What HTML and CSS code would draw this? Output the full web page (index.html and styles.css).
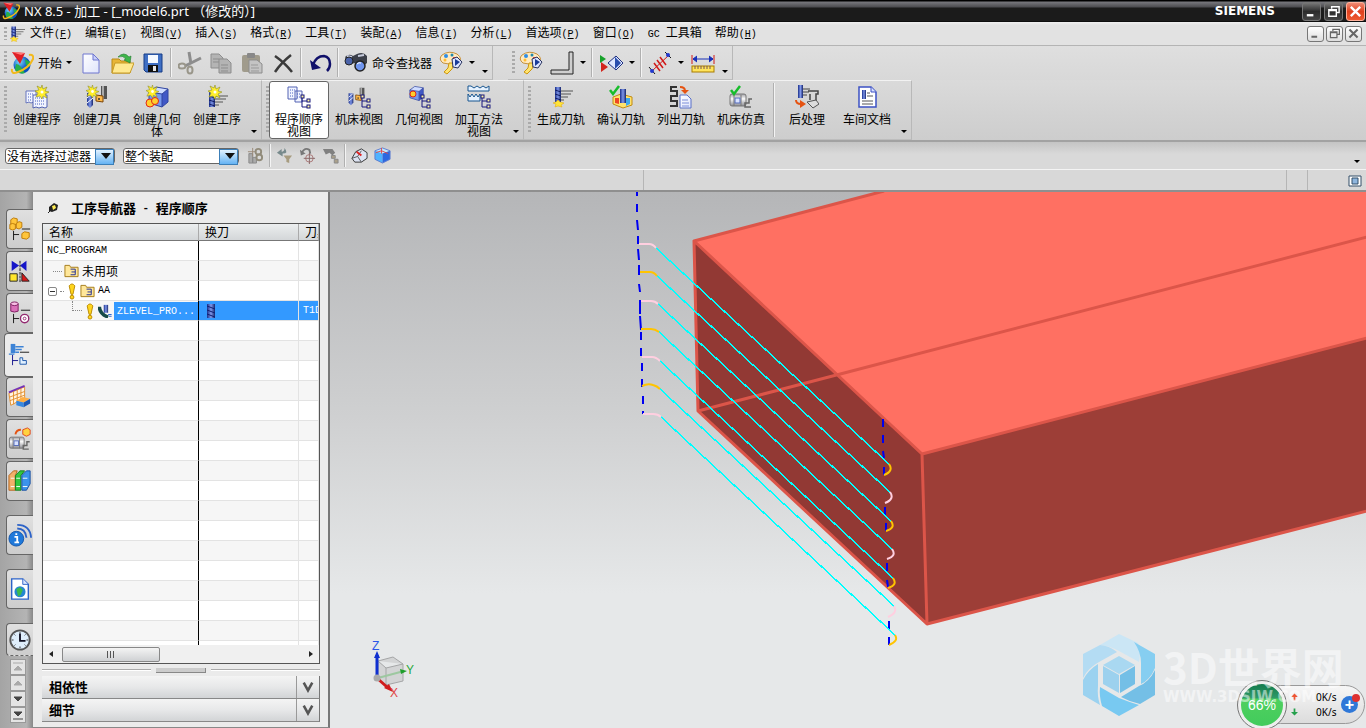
FILE: index.html
```
<!DOCTYPE html>
<html lang="zh-CN">
<head>
    <meta charset="UTF-8">
    <title>NX 8.5 - 加工</title>
    <link rel="stylesheet" href="styles.css">
</head>
<body>
<!-- icon library -->
<svg class="defs" aria-hidden="true">
    <defs>
        <linearGradient id="gBlue" x1="0" y1="0" x2="1" y2="1"><stop offset="0" stop-color="#c4d4fb"/><stop offset="1" stop-color="#3a5bd0"/></linearGradient>
        <linearGradient id="gPaper" x1="0" y1="0" x2="1" y2="1"><stop offset="0" stop-color="#ffffff"/><stop offset="1" stop-color="#dfe4fb"/></linearGradient>
        <linearGradient id="gTool"><stop offset="0" stop-color="#1a2f8a"/><stop offset=".5" stop-color="#7f97ea"/><stop offset="1" stop-color="#15246c"/></linearGradient>
        <linearGradient id="gMetal" x1="0" y1="0" x2="0" y2="1"><stop offset="0" stop-color="#a0a0a6"/><stop offset=".4" stop-color="#fafafa"/><stop offset="1" stop-color="#8c8c92"/></linearGradient>
        <radialGradient id="gGlobe" cx=".35" cy=".3"><stop offset="0" stop-color="#7be0ff"/><stop offset="1" stop-color="#0a50c0"/></radialGradient>
    </defs>
    <symbol id="i-nx" viewBox="0 0 24 24">
        <circle cx="12" cy="14" r="8.5" fill="url(#gGlobe)"/>
        <path d="M6 13q3 0 5 3t4 6q-6 2-10-3zM15 8l5 3v5l-4-2z" fill="#27b04a"/>
        <path d="M2 18q-1 6 6 3Q19 17 23 8q1-5-4-4" fill="none" stroke="#f2b91d" stroke-width="2"/>
        <path d="M2 1l13 1-5 11z" fill="#e01f26"/><path d="M2 1l13 1-4 2z" fill="#ff7b78"/>
    </symbol>
    <symbol id="i-mill" viewBox="0 0 24 24">
        <rect x="6" y="2" width="6" height="15" fill="url(#gTool)"/>
        <path d="M6 5l6 2M6 9l6 2M6 13l6 2" stroke="#101c66"/>
        <path d="M12 6h12M12 9h10M12 12h7M12 15h3" stroke="#555"/>
        <path d="M4 18l3-1 2-2 2 2 4 1-3 2 1 2-4-1-3 1 1-3z" fill="#ffe438" stroke="#e0a500" stroke-width=".5"/>
    </symbol>
    <symbol id="i-new" viewBox="0 0 24 24"><path d="M4 3h10l6 6v13H4z" fill="url(#gPaper)" stroke="#6e76d0"/><path d="M14 3v6h6z" fill="#c8cffa" stroke="#6e76d0"/></symbol>
    <symbol id="i-open" viewBox="0 0 24 24">
        <path d="M2 8h7l2 2h9v12H2z" fill="#e8b637" stroke="#b98a16"/><path d="M5 12h19l-4 10H2z" fill="#ffe991" stroke="#c79b26"/>
        <path d="M8 6q6-6 11 0l2-1-1 7-6-3 2-1q-3-4-8-2z" fill="#3fb54a" stroke="#1c7b2c" stroke-width=".6"/>
    </symbol>
    <symbol id="i-save" viewBox="0 0 24 24"><path d="M3 3h18v18H5l-2-2z" fill="#3f6fc4" stroke="#173d86"/><rect x="7" y="4" width="10" height="8" fill="#f5f9ff"/><rect x="7" y="14" width="10" height="7" fill="#111"/><rect x="12" y="15" width="3" height="5" fill="#e5e5e5"/></symbol>
    <symbol id="i-cut" viewBox="0 0 24 24"><path d="M11 1l2 12M23 7L7 15" stroke="#8d8d8d" stroke-width="3"/><g fill="none" stroke="#99968a" stroke-width="2"><ellipse cx="4" cy="15" rx="3.500" ry="2.500"/><ellipse cx="12" cy="19" rx="2.500" ry="3.500"/></g></symbol>
    <symbol id="i-copy" viewBox="0 0 24 24"><g fill="#b4b4b4" stroke="#8d8d8d"><path d="M2 3h8l4 4v10H2z"/><path d="M10 8h8l4 4v10H10z"/></g><path d="M4 8h6M4 11h6M12 14h7M12 17h7M12 20h7" stroke="#8d8d8d"/></symbol>
    <symbol id="i-paste" viewBox="0 0 24 24"><rect x="2" y="4" width="18" height="17" rx="2" fill="#a09b8c"/><rect x="7" y="2" width="8" height="5" rx="1" fill="#888"/><path d="M9 9h8l5 4v9H9z" fill="#c4c4c4" stroke="#8d8d8d"/><path d="M11 14h7M11 17h8M11 20h8" stroke="#999"/></symbol>
    <symbol id="i-delete" viewBox="0 0 24 24"><path d="M4 5q10 7 17 16M20 4Q10 12 4 21" fill="none" stroke="#3a3a3a" stroke-width="2.500"/></symbol>
    <symbol id="i-undo" viewBox="0 0 24 24"><path d="M5 14Q8 5 16 5q6 1 6 8 0 4-3 7" fill="none" stroke="#10106a" stroke-width="2.500"/><path d="M2 9l2 10 9-2z" fill="#10106a"/></symbol>
    <symbol id="i-find" viewBox="0 0 24 24"><path d="M1 6q4-4 8-1l4-2q6-3 10 2v7l-5 4-6-4-7 1z" fill="#3b3f49"/><path d="M3 5l5 1M14 5l6-1" stroke="#c7ccdd" stroke-width="2"/><circle cx="5" cy="10" r="4" fill="#4a62a8" stroke="#222"/><circle cx="16" cy="15" r="5" fill="#6f95ee" stroke="#222" stroke-width="1.500"/><path d="M13 13q2-2 4-1" stroke="#fff" fill="none"/></symbol>
    <symbol id="i-palette" viewBox="0 0 24 24">
        <path d="M3 4Q10-1 18 3q7 5 0 10-5 1-8 0l-6-1q-5-4-1-8z" fill="#ffeac0" stroke="#c5913f"/>
        <circle cx="7" cy="5" r="2" fill="#2f8de5"/><circle cx="13" cy="4" r="1.500" fill="#28a"/><circle cx="6" cy="9" r="1.500" fill="#fb3"/>
        <path d="M10 12l5 0-2 6-5 5-3-2 4-4z" fill="#ffe36e" stroke="#cc9612"/><rect x="14" y="6" width="4" height="4" fill="#e9432f"/>
        <path d="M13 8l5-2 5 5-4 6-5-1z" fill="#dce4ff" stroke="#29335f"/><path d="M16 8l5 3-5 4z" fill="#193a98"/>
    </symbol>
    <symbol id="i-corner" viewBox="0 0 24 24"><path d="M19 1h4v22H1v-4h18z" fill="#cfcfcf" stroke="#222"/></symbol>
    <symbol id="i-play" viewBox="0 0 24 24"><path d="M1 4l6 4-6 4z" fill="#17a22b"/><path d="M2 11l7 5-7 5z" fill="#d3251d"/><path d="M9 12l8-7 7 7-7 7z" fill="#dfe7ff" stroke="#1d2f80"/><path d="M16 6l6 6-6 6z" fill="#294eae"/></symbol>
    <symbol id="i-measure" viewBox="0 0 24 24"><path d="M4 20L21 4" stroke="#d01818"/><path d="M6 12l6 8M9 9l6 8M12 6l6 8" stroke="#d01818" stroke-width="1.500"/><path d="M1 16l6 7M17 1l6 6" stroke="#111"/><circle cx="4" cy="20" r="2" fill="#2038d0"/><circle cx="20" cy="4" r="2" fill="#2038d0"/></symbol>
    <symbol id="i-ruler" viewBox="0 0 24 24"><path d="M1 4v9M23 4v9" stroke="#d01818"/><path d="M2 8h20M6 5L2 8l4 3M18 5l4 3-4 3" stroke="#1830b8" fill="#1830b8"/><rect x="1" y="15" width="22" height="6" fill="#ffe45c" stroke="#a87d00"/><path d="M4 15v3M7 15v3M10 15v3M13 15v3M16 15v3M19 15v3" stroke="#755"/></symbol>
    <symbol id="i-star" viewBox="0 0 14 14"><path d="M7 0l1 4 4-2-2 4 4 1-4 2 2 4-4-2-1 3-2-3-4 1 2-4-3-2 4-1-2-4 4 2z" fill="#ffee2c" stroke="#8f8f20" stroke-width=".6"/><circle cx="7" cy="7" r="1.500" fill="#fff"/></symbol>
    <symbol id="i-pages" viewBox="0 0 24 24"><path d="M1 6h10v12l-2-1-3 1-2-1-3 1z" fill="#f1f4ff" stroke="#6675bd"/><path d="M8 10h14v12l-2 1-3-1-3 1-3-1-3 1z" fill="#f1f4ff" stroke="#5263b3"/><path d="M3 9h6M3 12h4M3 15h4M10 13h10M10 16h10M10 19h10" stroke="#4862c1" stroke-dasharray="1 1"/></symbol>
    <symbol id="i-cube" viewBox="0 0 24 24"><path d="M4 7l7-5 12 2-6 5z" fill="#cfdcff"/><path d="M4 7l13 2v13L4 18z" fill="#7698ee"/><path d="M17 9l6-5v13l-6 5z" fill="#4158c6"/><path d="M4 7l7-5 12 2v13l-6 5-13-4zM4 7l13 2v13M17 9l6-5" fill="none" stroke="#3145a0"/></symbol>
    <symbol id="i-tree" viewBox="0 0 12 15"><path d="M2 3v10h6M2 7h6" fill="none" stroke="#16167c"/><g fill="#fff7a0" stroke="#16167c"><rect x="1" y="1" width="3" height="3"/><rect x="7" y="5" width="3" height="3"/><rect x="7" y="11" width="3" height="3"/></g></symbol>
    <symbol id="i-cutter" viewBox="0 0 24 24"><path d="M2 8h6v12l-3 3-3-3z" fill="url(#gTool)"/><path d="M2 13l6-5M2 18l6-5" stroke="#fff"/><path d="M16 1h6v13h-6z" fill="#555"/><path d="M17 1h2v13h-2z" fill="#aaa"/><path d="M11 10l7 1v6l-7-1z" fill="#ffbb4c" stroke="#7b4305"/><circle cx="14" cy="14" r="1" fill="#333"/></symbol>
    <symbol id="i-mkprog" viewBox="0 0 24 24"><use href="#i-pages"/><use href="#i-star" x="10" y="0" width="14" height="14"/></symbol>
    <symbol id="i-mktool" viewBox="0 0 24 24"><use href="#i-cutter"/><use href="#i-star" x="1" y="0" width="13" height="13"/></symbol>
    <symbol id="i-mkgeo" viewBox="0 0 24 24"><use href="#i-cube"/><g fill="#ffcf2e" stroke="#e22716"><circle cx="5" cy="18" r="4"/><circle cx="10" cy="16" r="3.500"/></g><use href="#i-star" x="1" y="0" width="13" height="13"/></symbol>
    <symbol id="i-mkop" viewBox="0 0 24 24"><path d="M4 7h6v15H4z" fill="url(#gTool)"/><path d="M4 11l6 2M4 15l6 2M4 19l6 2" stroke="#101c66"/><path d="M10 11h13M10 14h11M10 17h8M10 20h4" stroke="#555"/><use href="#i-star" x="3" y="0" width="14" height="14"/></symbol>
    <symbol id="i-vprog" viewBox="0 0 24 24"><path d="M1 2h9v12H1zM8 6h7v11H8z" fill="#f1f4ff" stroke="#5263b3"/><path d="M3 5h5M3 8h4M3 11h4M10 9h4M10 12h4" stroke="#4862c1" stroke-dasharray="1 1"/><use href="#i-tree" x="13" y="9" width="12" height="15"/></symbol>
    <symbol id="i-vmach" viewBox="0 0 24 24"><use href="#i-cutter" width="19" height="23"/><use href="#i-tree" x="13" y="9" width="12" height="15"/></symbol>
    <symbol id="i-vgeo" viewBox="0 0 24 24"><use href="#i-cube" width="17" height="17"/><circle cx="6" cy="9" r="3" fill="#ffcf2e" stroke="#e22716"/><use href="#i-tree" x="13" y="9" width="12" height="15"/></symbol>
    <symbol id="i-vmeth" viewBox="0 0 24 24"><path d="M1 1v5h21V1l-3 2-3-2-3 2-3-2-3 2-3-2zM1 16V9l2 3 2-3 2 3 2-3 2 3 2-3v7z" fill="#e6f2ff" stroke="#17558f"/><use href="#i-tree" x="13" y="9" width="12" height="15"/></symbol>
    <symbol id="i-verify" viewBox="0 0 24 24"><path d="M4 12l8-3 11 3v8l-9 3-10-4z" fill="#ffe26b" stroke="#c18a10"/><path d="M6 13h4v6l-4-1z" fill="#ee4626"/><path d="M17 13h4v6l-4 2z" fill="#3ea7ed"/><rect x="11" y="4" width="6" height="14" fill="url(#gTool)"/><path d="M1 5l3 4 6-8" fill="none" stroke="#17bd2b" stroke-width="2.500"/></symbol>
    <symbol id="i-list" viewBox="0 0 24 24"><path d="M8 2H2v4h6v5H2v5h6v5H1" fill="none" stroke="#333" stroke-width="2"/><path d="M11 10h7l4 4v9H11z" fill="url(#gPaper)" stroke="#5a70c7"/><path d="M13 15h6M13 18h7M13 21h7" stroke="#7d8ed8"/><path d="M11 2q5 0 5 4" fill="none" stroke="#e55312" stroke-width="2"/><path d="M12 5h8l-4 4z" fill="#e55312"/></symbol>
    <symbol id="i-lathe" viewBox="0 0 24 24"><rect x="1" y="9" width="16" height="12" rx="2" fill="url(#gMetal)" stroke="#777"/><path d="M5 10v11M12 10v11" stroke="#777"/><rect x="6" y="13" width="5" height="5" fill="#d9e2ff" stroke="#536ab8"/><path d="M23 14h-3v4h-4v4h6" fill="none" stroke="#666" stroke-width="1.500"/></symbol>
    <symbol id="i-sim" viewBox="0 0 24 24"><use href="#i-lathe"/><path d="M2 5l3 4 6-8" fill="none" stroke="#17bd2b" stroke-width="2.500"/></symbol>
    <symbol id="i-post" viewBox="0 0 24 24"><rect x="3" y="0" width="5" height="13" fill="url(#gTool)"/><path d="M8 4h7M8 7h6M8 10h4" stroke="#444"/><path d="M13 6h10v3h-2v7M15 9v6" stroke="#444" stroke-width="1.500" fill="none"/><path d="M12 17l9-2 3 4-6 4z" fill="#ddd" stroke="#555"/><path d="M1 15q0 4 5 4" fill="none" stroke="#e55312" stroke-width="2"/><path d="M5 15l6 4-6 4z" fill="#e55312"/></symbol>
    <symbol id="i-doc" viewBox="0 0 24 24"><path d="M4 2h12l5 5v15H4z" fill="#fff" stroke="#3d51c3" stroke-width="1.500"/><path d="M16 2v5h5" fill="#d8e0ff" stroke="#3d51c3"/><rect x="7" y="5" width="4" height="9" fill="url(#gTool)"/><path d="M12 8h3M12 11h6M7 16h11M7 19h11" stroke="#555"/></symbol>
    <symbol id="i-chain" viewBox="0 0 18 18"><path d="M2 7h4v10H2zM6 11h4v6H6z" fill="#aaa" stroke="#888"/><path d="M6 1v9M1 5h9" stroke="#987"/><g fill="none" stroke="#918b7a" stroke-width="2"><circle cx="12" cy="5" r="3"/><circle cx="13" cy="11" r="3"/></g></symbol>
    <symbol id="i-filter" viewBox="0 0 18 18"><path d="M9 1q5 6-2 6v3L1 6l5-4v3q3 0 3-4z" fill="#778a8c"/><path d="M8 9h9l-3 4v4l-3-1v-3z" fill="#a79c80"/></symbol>
    <symbol id="i-reset" viewBox="0 0 18 18"><path d="M3 6q3-6 8-3l1 4" fill="none" stroke="#777" stroke-width="2"/><path d="M1 3l1 6 5-2z" fill="#777"/><circle cx="11" cy="12" r="4" fill="none" stroke="#a77"/><path d="M11 6v12M5 12h12" stroke="#866"/></symbol>
    <symbol id="i-binoc2" viewBox="0 0 18 18"><path d="M1 2h10l3 4-3 3-3-3-4 2z" fill="#808080"/><path d="M10 9h4v3h-4zM13 13h4v4h-4z" fill="#aaa08a" stroke="#888"/></symbol>
    <symbol id="i-shade" viewBox="0 0 18 18"><path d="M1 12L5 5l6-3 6 4v6l-6 4H4z" fill="#dce3f2" stroke="#333"/><path d="M1 12l6-2 4 6M7 10l4-6" fill="none" stroke="#555"/><path d="M6 5l5 4" stroke="#e02020" stroke-width="2"/></symbol>
    <symbol id="i-solid" viewBox="0 0 18 18"><path d="M1 4l8-3 8 3-8 3z" fill="#bfeaff"/><path d="M1 4l8 3v10l-8-4z" fill="#4fb3ff"/><path d="M17 4L9 7v10l8-4z" fill="#2c68e0"/><path d="M1 4l8-3 8 3v9l-8 4-8-4z" fill="none" stroke="#5c7bd0"/><path d="M8 1v6M2 6l6-2 7 3" stroke="#e04848" fill="none"/></symbol>
    <symbol id="i-asm" viewBox="0 0 26 26"><g fill="#ffc53b" stroke="#bd7a06"><path d="M3 3l3-2 4 1v5l-3 2-4-1z"/><path d="M2 8l3-1 3 1v5l-3 1-3-1zM9 7l3-2 3 1v5l-3 2-3-1zM15 18l3-2 5 1v5l-3 2-5-1z"/></g><path d="M6 15v10M6 19h6M15 13h9" stroke="#111"/></symbol>
    <symbol id="i-constr" viewBox="0 0 26 26"><path d="M4 2l8 5-8 6zM20 2l-7 5 7 6z" fill="#1616c8"/><path d="M13 2v23" stroke="#111" stroke-dasharray="3 1"/><path d="M2 16h8v8H2z" fill="#ffe62b" stroke="#222"/><path d="M15 15l8 9h-8z" fill="#d81818" stroke="#222"/></symbol>
    <symbol id="i-part" viewBox="0 0 26 26"><path d="M3 3v8q4 2 8 0V3z" fill="#d970b8" stroke="#7d1b60"/><ellipse cx="7" cy="3" rx="4" ry="2" fill="#f7bfe4" stroke="#7d1b60"/><path d="M6 14v10M6 19h6M14 10h10" stroke="#111"/><circle cx="18" cy="19" r="4.500" fill="#fff" stroke="#92286f" stroke-width="1.500"/><circle cx="18" cy="19" r="1.500" fill="none" stroke="#92286f"/></symbol>
    <symbol id="i-opnav" viewBox="0 0 26 26"><path d="M4 1h5v10H4z" fill="#3d83d6"/><path d="M9 4h9M9 7h7M9 10h4M2 12h6" stroke="#3d83d6" stroke-width="1.500"/><path d="M6 13v11M6 19h6" stroke="#12128c"/><path d="M14 10h10" stroke="#111"/><path d="M14 16h3v3h4v4h-7z" fill="#e0f0ff" stroke="#1a55a8"/></symbol>
    <symbol id="i-mfg" viewBox="0 0 26 26"><path d="M1 9l17-7v12L3 22z" fill="#fff4e2" stroke="#e38e2b"/><path d="M1 8l17-7" stroke="#7432b8" stroke-width="2"/><path d="M2 13l16-6M2 17l16-6M6 7v14M10 5v14M14 4v12" stroke="#e38e2b"/><path d="M9 17l7-4 8 2-7 4z" fill="#ffae42"/><path d="M9 17l8 2v5l-8-2z" fill="#3689e2"/><path d="M17 19l7-4v5l-7 4z" fill="#1c59b6"/></symbol>
    <symbol id="i-mach" viewBox="0 0 26 26"><use href="#i-lathe" y="2" width="25" height="24"/><path d="M16 3l5-2 3 2v5l-4 2-4-2z" fill="#ffd23e" stroke="#d42"/><path d="M14 3q-5 0-6 5" fill="none" stroke="#e55312" stroke-width="2"/></symbol>
    <symbol id="i-books" viewBox="0 0 26 26"><path d="M1 7l5-5h4L8 7v16H1z" fill="#f2b06a" stroke="#b5631b"/><path d="M8 7l5-5h5l-4 5v16H8z" fill="#31c83e" stroke="#147a20"/><path d="M15 7l5-5h4v14l-4 7h-5z" fill="#3b93ea" stroke="#1a4fa0"/><path d="M3 10h4M3 19h4M9 10h4M9 19h4M16 10h5M16 19h5" stroke="#fff"/></symbol>
    <symbol id="i-info" viewBox="0 0 26 26"><circle cx="9" cy="17" r="8" fill="#1f79da" stroke="#1555a8"/><path d="M9 11v2M7 15h3v6M7 21h5" stroke="#fff" stroke-width="2" fill="none"/><path d="M10 6q9 0 10 10M10 2q14 0 15 14" fill="none" stroke="#2d63c8" stroke-width="2"/></symbol>
    <symbol id="i-web" viewBox="0 0 26 26"><path d="M4 2h12l6 6v16H4z" fill="#fff" stroke="#2d63c8" stroke-width="1.500"/><path d="M16 2v6h6" fill="#d7e5ff" stroke="#2d63c8"/><circle cx="13" cy="16" r="6" fill="#2687d0"/><path d="M9 13l4-2 3 3-2 5-3 2z" fill="#3dbb4b"/></symbol>
    <symbol id="i-clock" viewBox="0 0 26 26"><circle cx="13" cy="13" r="10.500" fill="#dfeefb" stroke="#555" stroke-width="2"/><path d="M13 4v2M13 20v2M4 13h2M20 13h2M7 7l1 1M19 7l-1 1M7 19l1-1M19 19l-1-1" stroke="#333"/><path d="M13 6v8h6" fill="none" stroke="#112" stroke-width="2"/></symbol>
    <symbol id="i-folder" viewBox="0 0 16 14"><path d="M1 1h5l1 2h8v10H1z" fill="#ffe79a" stroke="#a37a17"/><path d="M7 5h5v6H7M8 8h4" fill="none" stroke="#1b2a98"/></symbol>
    <symbol id="i-warn" viewBox="0 0 10 18"><path d="M2 3q3-4 6 0L6 12H4z" fill="#ffd51d" stroke="#b98900"/><circle cx="5" cy="15" r="2" fill="#ffd51d" stroke="#b98900"/></symbol>
    <symbol id="i-zlevel" viewBox="0 0 16 16"><path d="M1 3q0 8 10 12" fill="none" stroke="#164a48" stroke-width="4"/><rect x="6" y="1" width="5" height="9" fill="url(#gTool)"/><path d="M11 12h4M12 14h3" stroke="#15c"/></symbol>
    <symbol id="i-holder" viewBox="0 0 8 14"><rect width="8" height="14" fill="url(#gTool)"/><path d="M0 2l8 3M0 6l8 3M0 10l8 3" stroke="#0f1d70"/></symbol>
    <symbol id="i-pin" viewBox="0 0 12 12"><path d="M2 5l5-4 4 2-1 5-5 2-3-1z" fill="#222"/><path d="M5 4l3-1 1 3-3 2z" fill="#ffed55"/><path d="M4 8l-3 3" stroke="#222"/></symbol>
    <symbol id="i-full" viewBox="0 0 14 12"><path d="M1 1h12v10H1z" fill="#fff" stroke="#334e68"/><path d="M4 3h6v6H4z" fill="#8fb6de" stroke="#334e68"/></symbol>
    <symbol id="i-min" viewBox="0 0 16 16"><path d="M3 12h7" stroke="currentColor" stroke-width="2.500"/></symbol>
    <symbol id="i-rest" viewBox="0 0 16 16"><path d="M6 5V3h8v6h-3M3 6h8v7H3zM3 7h8" fill="none" stroke="currentColor" stroke-width="1.500"/></symbol>
    <symbol id="i-close" viewBox="0 0 16 16"><path d="M3 3l10 10M13 3L3 13" stroke="currentColor" stroke-width="2.500"/></symbol>
    <symbol id="i-chev" viewBox="0 0 14 12"><path d="M2 1l5 9 5-9" fill="none" stroke="#555" stroke-width="3"/></symbol>
</svg>

<header class="titlebar">
    <svg class="logo"><use href="#i-nx"/></svg>
    <h1>NX 8.5 - 加工 - [_model6.prt （修改的）]</h1>
    <span class="brand">SIEMENS</span>
    <div class="winbtns">
        <button aria-label="最小化"><svg><use href="#i-min"/></svg></button>
        <button aria-label="还原"><svg><use href="#i-rest"/></svg></button>
        <button class="close" aria-label="关闭"><svg><use href="#i-close"/></svg></button>
    </div>
</header>

<nav class="menubar">
    <span class="grip"></span>
    <svg class="logo"><use href="#i-mill"/></svg>
    <a href="#">文件<span>(<u>F</u>)</span></a>
    <a href="#">编辑<span>(<u>E</u>)</span></a>
    <a href="#">视图<span>(<u>V</u>)</span></a>
    <a href="#">插入<span>(<u>S</u>)</span></a>
    <a href="#">格式<span>(<u>R</u>)</span></a>
    <a href="#">工具<span>(<u>T</u>)</span></a>
    <a href="#">装配<span>(<u>A</u>)</span></a>
    <a href="#">信息<span>(<u>I</u>)</span></a>
    <a href="#">分析<span>(<u>L</u>)</span></a>
    <a href="#">首选项<span>(<u>P</u>)</span></a>
    <a href="#">窗口<span>(<u>O</u>)</span></a>
    <a href="#"><span>GC </span>工具箱</a>
    <a href="#">帮助<span>(<u>H</u>)</span></a>
    <div class="docbtns">
        <button aria-label="最小化"><svg><use href="#i-min"/></svg></button>
        <button aria-label="还原"><svg><use href="#i-rest"/></svg></button>
        <button aria-label="关闭"><svg><use href="#i-close"/></svg></button>
    </div>
</nav>

<div class="toolbar">
    <div class="group">
        <span class="grip"></span>
        <button class="tool wide"><svg><use href="#i-nx"/></svg>开始<i class="arrow"></i></button>
        <button class="tool" aria-label="新建"><svg><use href="#i-new"/></svg></button>
        <button class="tool" aria-label="打开"><svg><use href="#i-open"/></svg></button>
        <button class="tool" aria-label="保存"><svg><use href="#i-save"/></svg></button>
        <span class="sep"></span>
        <button class="tool" aria-label="剪切"><svg><use href="#i-cut"/></svg></button>
        <button class="tool" aria-label="复制"><svg><use href="#i-copy"/></svg></button>
        <button class="tool" aria-label="粘贴"><svg><use href="#i-paste"/></svg></button>
        <button class="tool" aria-label="删除"><svg><use href="#i-delete"/></svg></button>
        <span class="sep"></span>
        <button class="tool" aria-label="撤消"><svg><use href="#i-undo"/></svg></button>
        <span class="sep"></span>
        <button class="tool wide"><svg><use href="#i-find"/></svg>命令查找器</button>
        <button class="tool" aria-label="角色"><svg><use href="#i-palette"/></svg></button>
        <button class="drop" aria-label="更多"><i class="arrow"></i></button>
        <button class="more" aria-label="工具条选项"><i class="arrow"></i></button>
    </div>
    <div class="group">
        <span class="grip"></span>
        <button class="tool" aria-label="角色"><svg><use href="#i-palette"/></svg></button>
        <button class="tool" aria-label="拐角"><svg><use href="#i-corner"/></svg></button>
        <button class="drop" aria-label="更多"><i class="arrow"></i></button>
        <span class="sep"></span>
        <button class="tool" aria-label="播放"><svg><use href="#i-play"/></svg></button>
        <button class="drop" aria-label="更多"><i class="arrow"></i></button>
        <span class="sep"></span>
        <button class="tool" aria-label="测量"><svg><use href="#i-measure"/></svg></button>
        <button class="drop" aria-label="更多"><i class="arrow"></i></button>
        <button class="tool" aria-label="测量距离"><svg><use href="#i-ruler"/></svg></button>
        <button class="more" aria-label="工具条选项"><i class="arrow"></i></button>
    </div>
</div>

<div class="toolbar big">
    <div class="group">
        <span class="grip"></span>
        <button class="cmd"><svg><use href="#i-mkprog"/></svg>创建程序</button>
        <button class="cmd"><svg><use href="#i-mktool"/></svg>创建刀具</button>
        <button class="cmd"><svg><use href="#i-mkgeo"/></svg>创建几何体</button>
        <button class="cmd"><svg><use href="#i-mkop"/></svg>创建工序</button>
        <button class="more" aria-label="工具条选项"><i class="arrow"></i></button>
    </div>
    <div class="group">
        <span class="grip"></span>
        <button class="cmd on"><svg><use href="#i-vprog"/></svg>程序顺序视图</button>
        <button class="cmd"><svg><use href="#i-vmach"/></svg>机床视图</button>
        <button class="cmd"><svg><use href="#i-vgeo"/></svg>几何视图</button>
        <button class="cmd"><svg><use href="#i-vmeth"/></svg>加工方法视图</button>
        <button class="more" aria-label="工具条选项"><i class="arrow"></i></button>
    </div>
    <div class="group">
        <span class="grip"></span>
        <button class="cmd"><svg><use href="#i-mill"/></svg>生成刀轨</button>
        <button class="cmd"><svg><use href="#i-verify"/></svg>确认刀轨</button>
        <button class="cmd"><svg><use href="#i-list"/></svg>列出刀轨</button>
        <button class="cmd"><svg><use href="#i-sim"/></svg>机床仿真</button>
        <span class="sep"></span>
        <button class="cmd"><svg><use href="#i-post"/></svg>后处理</button>
        <button class="cmd"><svg><use href="#i-doc"/></svg>车间文档</button>
        <button class="more" aria-label="工具条选项"><i class="arrow"></i></button>
    </div>
</div>

<div class="selbar">
    <label class="combo"><select aria-label="类型过滤器"><option>没有选择过滤器</option></select></label>
    <label class="combo scope"><select aria-label="选择范围"><option>整个装配</option></select></label>
    <button aria-label="链"><svg><use href="#i-chain"/></svg></button>
    <span class="sep"></span>
    <button aria-label="过滤"><svg><use href="#i-filter"/></svg></button>
    <button aria-label="重置"><svg><use href="#i-reset"/></svg></button>
    <button aria-label="查找"><svg><use href="#i-binoc2"/></svg></button>
    <span class="sep"></span>
    <button aria-label="着色"><svg><use href="#i-shade"/></svg></button>
    <button aria-label="实体"><svg><use href="#i-solid"/></svg></button>
    <button class="more" aria-label="工具条选项"><i class="arrow"></i></button>
</div>

<div class="cuebar">
    <div class="cue"></div>
    <div class="cue"></div>
    <div class="slot"></div>
    <div class="slot last"><svg><use href="#i-full"/></svg></div>
</div>

<main>
    <aside class="rail">
        <button aria-label="装配导航器"><svg><use href="#i-asm"/></svg></button>
        <button aria-label="约束导航器"><svg><use href="#i-constr"/></svg></button>
        <button aria-label="部件导航器"><svg><use href="#i-part"/></svg></button>
        <button class="on" aria-label="工序导航器"><svg><use href="#i-opnav"/></svg></button>
        <button aria-label="加工特征"><svg><use href="#i-mfg"/></svg></button>
        <button aria-label="机床导航器"><svg><use href="#i-mach"/></svg></button>
        <button aria-label="重用库"><svg><use href="#i-books"/></svg></button>
        <button class="apart" aria-label="HD3D 工具"><svg><use href="#i-info"/></svg></button>
        <button class="apart" aria-label="浏览器"><svg><use href="#i-web"/></svg></button>
        <button class="apart cutoff" aria-label="历史记录"><svg><use href="#i-clock"/></svg></button>
        <div class="steps">
            <button aria-label="顶部" disabled><svg viewBox="0 0 10 10"><path d="M0 1h10M1 8h8L5 4z"/></svg></button>
            <button aria-label="向上" disabled><svg viewBox="0 0 10 10"><path d="M1 7h8L5 3z"/></svg></button>
            <button aria-label="向下"><svg viewBox="0 0 10 10"><path d="M1 3h8L5 7z"/></svg></button>
            <button aria-label="底部"><svg viewBox="0 0 10 10"><path d="M1 2h8L5 6zM0 9h10"/></svg></button>
        </div>
    </aside>

    <section class="panel">
        <h2><svg><use href="#i-pin"/></svg>工序导航器<span> - </span>程序顺序</h2>
        <div class="tree">
            <div class="rows">
                <table>
                    <colgroup><col class="c1"><col class="c2"><col></colgroup>
                    <thead>
                    <tr><th>名称</th><th>换刀</th><th>刀具</th></tr>
                    </thead>
                    <tbody>
                    <tr><td class="lat">NC_PROGRAM</td><td></td><td></td></tr>
                    <tr><td><div class="node n1"><i class="dots"></i><svg class="folder"><use href="#i-folder"/></svg>未用项</div></td><td></td><td></td></tr>
                    <tr><td><div class="node n2"><i class="box"></i><i class="dots short"></i><svg class="warn"><use href="#i-warn"/></svg><svg class="folder"><use href="#i-folder"/></svg><span class="lat">AA</span></div></td><td></td><td></td></tr>
                    <tr class="sel"><td><div class="node n3"><i class="dots"></i><svg class="warn"><use href="#i-warn"/></svg><svg class="folder"><use href="#i-zlevel"/></svg><span class="lat pick">ZLEVEL_PRO...</span></div></td><td><svg class="holder"><use href="#i-holder"/></svg></td><td class="lat">T1D</td></tr>
                    <tr><td></td><td></td><td></td></tr>
                    <tr><td></td><td></td><td></td></tr>
                    <tr><td></td><td></td><td></td></tr>
                    <tr><td></td><td></td><td></td></tr>
                    <tr><td></td><td></td><td></td></tr>
                    <tr><td></td><td></td><td></td></tr>
                    <tr><td></td><td></td><td></td></tr>
                    <tr><td></td><td></td><td></td></tr>
                    <tr><td></td><td></td><td></td></tr>
                    <tr><td></td><td></td><td></td></tr>
                    <tr><td></td><td></td><td></td></tr>
                    <tr><td></td><td></td><td></td></tr>
                    <tr><td></td><td></td><td></td></tr>
                    <tr><td></td><td></td><td></td></tr>
                    <tr><td></td><td></td><td></td></tr>
                    <tr><td></td><td></td><td></td></tr>
                    <tr><td></td><td></td><td></td></tr>
                    </tbody>
                </table>
            </div>
            <div class="hscroll">
                <i class="left"></i><span class="thumb"><b></b></span><i class="right"></i>
            </div>
        </div>
        <div class="splitter"><span></span></div>
        <button class="fold">相依性<svg><use href="#i-chev"/></svg></button>
        <button class="fold">细节<svg><use href="#i-chev"/></svg></button>
    </section>

    <section class="view">
        <svg class="scene" viewBox="330 192 1036 536" preserveAspectRatio="xMinYMin slice">
            <!-- block -->
            <path d="M694 241L880 192H1366V338L922 454z" fill="#ff7062"/>
            <path d="M694 241L922 454 927 624 698 411z" fill="#923934"/>
            <path d="M922 454L1366 338V511L927 624z" fill="#9d3e37"/>
            <path d="M884 191L694 241 922 454 1367 338M694 241L698 411 927 624 1367 511M922 454L927 624M698 411L1367 237" fill="none" stroke="#dc5549" stroke-width="3" stroke-linejoin="round"/>
            <!-- tool path -->
            <g fill="none" stroke="#0000f0" stroke-width="2">
                <path d="M637 192v4M637 204v8M637 220l1 10M638 236v8M638 249l1 11M639 265v10M639 284l1 8M640 300v14M640 316l1 14M641 332v8M641 348v8M642 363v8M642 379v8M643 396v8M643 411v3"/>
                <path d="M883 419v8M883 435v8M883 451l1 7M884 467v8M885 507v8M886 523v8M887 563v8M887 580l1 7M889 621v8M889 637v8"/>
            </g>
            <g class="feed" fill="none" stroke="#00ffff" stroke-width="1.500">
                <path d="M656 248L889 464M657 276L890 492M658 304L891 521M659 332L892 549M660 361L893 578M660 389L894 606M661 417L895 635"/>
            </g>
            <g fill="none" stroke="#ffcfe0" stroke-width="2">
                <path d="M639 244h10q4 0 7 4M641 301h10q4 0 7 3M642 357h10q4 0 8 4M643 414h10q5 0 8 3M890 492q5 7-5 11M892 549q5 7-5 10M894 606q4 7-6 11" />
            </g>
            <g fill="none" stroke="#ffc400" stroke-width="2">
                <path d="M640 272h10q4 0 7 4M641 329h10q4 0 8 3M642 386q6-3 11-1 4 1 7 4M889 464q5 7-5 11M891 521q5 7-5 10M893 578q5 7-5 10M895 635q4 6-6 10"/>
            </g>
            <!-- csys triad -->
            <g>
                <path d="M378 661l15-4 10 7v17l-17 4-8-6zM378 661l8 7 17-4M386 668v17" fill="#d3d4d5" stroke="#a5a6a7"/>
                <path d="M378 678l26-7" stroke="#9dc8a0" stroke-width="2"/><path d="M400 669l7 2-6 3z" fill="#1f9e2c"/>
                <path d="M377 678V655" stroke="#0f2fd0" stroke-width="3"/><path d="M374 658l3-7 3 7z" fill="#0f2fd0"/>
                <path d="M378 679l9 8" stroke="#d01c1c" stroke-width="3"/><path d="M384 688l5-4 4 8z" fill="#d01c1c"/>
                <circle cx="377" cy="678" r="3.500" fill="#aaa"/>
                <text x="372" y="650" fill="#2b56e8">Z</text><text x="406" y="674" fill="#2ba83a">Y</text><text x="390" y="697" fill="#e04545">X</text>
            </g>
        </svg>
        <div class="speed">
            <div class="ball">66%</div>
            <ul>
                <li><svg viewBox="0 0 8 8"><path d="M4 0L8 4H5V8H3V4H0z" fill="#ee5535"/></svg>0K/s</li>
                <li><svg viewBox="0 0 8 8"><path d="M4 8L8 4H5V0H3V4H0z" fill="#25a04c"/></svg>0K/s</li>
            </ul>
            <button aria-label="加速">+</button>
        </div>
        <div class="mark">
            <svg viewBox="0 0 72 82">
                <path d="M17 11L36 0 55 9Q58 20 56 28L36 17Q27 12 17 11z" fill="#cbe6f5"/>
                <path d="M0 20L17 11Q27 12 34 18L16 28Q5 34 0 44z" fill="#b4dcf3"/>
                <path d="M0 46Q5 36 15 30V52Q14 62 17 71L0 61z" fill="#9bd2f0"/>
                <path d="M17 53L36 64Q46 68 56 71L36 82 19 72Q16 62 17 53z" fill="#78c9f1"/>
                <path d="M72 36V61L57 70Q47 68 38 63L56 52Q66 48 72 36z" fill="#74bfe6"/>
                <path d="M51 8L72 20V34Q67 46 58 50V29Q58 18 51 8z" fill="#86cef1"/>
                <path d="M36 22L52 31 36 40 20 31z" fill="#a9d8f1"/><path d="M20 32L36 41V59L20 50z" fill="#9cd1ee"/><path d="M52 32L37 41V59L52 50z" fill="#74bfe6"/>
            </svg>
            <p><strong>3D世界网</strong><span>WWW.3DSJW.COM</span></p>
        </div>
    </section>
</main>
</body>
</html>
```
FILE: styles.css
```
* {
    box-sizing: border-box;
}

body {
    margin: 0;
    height: 100vh;
    display: flex;
    flex-direction: column;
    overflow: hidden;
    background: #dcdcdc;
    color: #000;
    font-family: "Noto Sans CJK SC", sans-serif;
    font-size: 12px;
    line-height: 16px;
}

button {
    margin: 0;
    padding: 0;
    border: 0;
    background: none;
    color: inherit;
    font: inherit;
    display: flex;
    align-items: center;
    justify-content: center;
    flex: none;
}

svg {
    display: block;
    flex: none;
}

.defs {
    position: absolute;
    width: 0;
    height: 0;
}

/* title bar */
.titlebar {
    height: 22px;
    flex: none;
    display: flex;
    align-items: center;
    padding: 0 1px 0 2px;
    background: linear-gradient(#000 0, #000 1px, #77777c 2px, #4c4c50 7px, #1b1b1b 8px, #1b1b1b 21px, #000 22px);
    color: #fff;
}

.logo {
    width: 18px;
    height: 18px;
}

.titlebar h1 {
    margin: 0 0 0 4px;
    font: 13px/20px "Noto Sans", "Noto Sans CJK SC", sans-serif;
    flex: 1;
}

.brand {
    font: bold 12px/20px "DejaVu Sans", sans-serif;
}

.winbtns {
    display: flex;
    gap: 3px;
    margin-left: 27px;
}

.winbtns button {
    width: 19px;
    height: 19px;
    border: 1px solid #777;
    border-radius: 3px;
    background: linear-gradient(#777, #2c2c2c 50%, #444);
}

.winbtns .close {
    border-color: #ffb19b;
    background: linear-gradient(#ef8a74, #e0401d 50%, #ee5a30);
}

.winbtns svg {
    width: 15px;
    height: 15px;
}

/* menu */
.menubar {
    height: 24px;
    flex: none;
    display: flex;
    align-items: center;
    padding: 0 4px;
    background: linear-gradient(#f0f0f0, #e2e2e2 3px);
    border-bottom: 1px solid #b4b4b4;
}

.menubar .logo {
    margin-right: 5px;
}

.menubar a {
    margin-right: 13px;
    color: #000;
    text-decoration: none;
    white-space: pre;
}

.menubar a span,
.lat {
    font: 10px/16px "Liberation Mono", monospace;
}

.docbtns {
    display: flex;
    gap: 2px;
    margin-left: auto;
}

.docbtns button {
    width: 17px;
    height: 16px;
    border: 1px solid #777;
    border-radius: 3px;
    background: linear-gradient(#fff, #ddd);
    color: #666;
}

.docbtns svg {
    width: 13px;
    height: 13px;
}

/* tool bars */
.toolbar {
    height: 34px;
    flex: none;
    display: flex;
    gap: 15px;
    background: linear-gradient(#dfdfdf, #d8d8d8);
}

.group {
    display: flex;
    align-items: center;
    padding-left: 4px;
    border-right: 1px solid #b8b8b8;
    border-bottom: 1px solid #bdbdbd;
}

.grip {
    width: 3px;
    align-self: stretch;
    margin: 5px 0;
    flex: none;
    background: repeating-linear-gradient(#aaa 0, #aaa 2px, transparent 2px, transparent 4px);
}

.sep {
    width: 2px;
    align-self: stretch;
    margin: 2px 2px;
    flex: none;
    border-left: 1px solid #b0b0b0;
    border-right: 1px solid #f4f4f4;
}

.tool {
    width: 31px;
    height: 32px;
}

.tool svg {
    width: 24px;
    height: 24px;
}

.tool.wide {
    width: auto;
    padding: 0 3px;
    gap: 4px;
}

.arrow {
    width: 0;
    height: 0;
    border: 3px solid transparent;
    border-top-color: #000;
    border-bottom: 0;
}

.drop {
    width: 12px;
    height: 32px;
}

.more {
    width: 14px;
    align-self: flex-end;
    height: 16px;
}

.toolbar.big {
    height: 62px;
    gap: 0;
    background: linear-gradient(#dadada, #cdcdcd);
    border-bottom: 2px solid #a2a2a2;
}

.big .group {
    border-top: 1px solid #f2f2f2;
    height: 60px;
}

.cmd {
    width: 60px;
    height: 58px;
    padding: 3px 5px 0;
    flex-direction: column;
    justify-content: flex-start;
    border: 1px solid transparent;
    line-height: 12px;
}

.cmd svg {
    width: 24px;
    height: 24px;
    margin-bottom: 4px;
}

.cmd.on {
    border: 1px solid #666;
    border-radius: 3px;
    background: #fff;
}

/* selection bar */
.selbar {
    height: 28px;
    flex: none;
    display: flex;
    align-items: center;
    padding: 0 2px 0 5px;
    background: linear-gradient(#c4c4c4, #d9d9d9 12px);
    border-bottom: 1px solid #f4f4f4;
}

.combo {
    position: relative;
    width: 110px;
    height: 16px;
    margin-right: 8px;
}

.combo.scope {
    width: 116px;
    margin-right: 5px;
}

.combo select {
    display: block;
    width: 100%;
    height: 16px;
    padding: 0 18px 0 1px;
    border: 1px solid #666;
    border-radius: 3px;
    background: #fff;
    color: #000;
    font: 12px/14px "Noto Sans CJK SC", sans-serif;
    appearance: none;
}

.combo::after {
    content: "";
    position: absolute;
    top: 1px;
    right: 1px;
    width: 17px;
    height: 14px;
    border: 1px solid #3c7fb8;
    background: linear-gradient(#e2f2ff, #65b3f3);
    pointer-events: none;
}

.combo::before {
    content: "";
    position: absolute;
    z-index: 1;
    top: 5px;
    right: 4px;
    border: 5px solid transparent;
    border-top: 6px solid #111;
    border-bottom: 0;
    pointer-events: none;
}

.selbar button {
    width: 23px;
    height: 24px;
}

.selbar button svg {
    width: 17px;
    height: 17px;
}

.selbar .sep {
    margin: 2px;
}

.selbar .more {
    width: 14px;
    height: 16px;
    margin-left: auto;
}

.cuebar {
    height: 22px;
    flex: none;
    display: flex;
    background: #d8d8d8;
    border-bottom: 2px solid #8f8f8f;
}

.cue {
    flex: 1;
    border-right: 1px solid #b5b5b5;
}

.slot {
    width: 21px;
    border-right: 1px solid #b5b5b5;
}

.slot.last {
    width: 58px;
    border: 0;
    padding: 5px 4px 0 0;
    display: flex;
    justify-content: flex-end;
}

.slot svg {
    width: 14px;
    height: 12px;
}

/* work area */
main {
    flex: 1;
    min-height: 0;
    display: flex;
}

.rail {
    width: 33px;
    flex: none;
    padding-top: 17px;
    display: flex;
    flex-direction: column;
    align-items: flex-end;
    gap: 2px;
    background: linear-gradient(90deg, #a4a4a4, #b4b4b4 80%, #888);
}

.rail > button {
    width: 27px;
    height: 40px;
    border: 1px solid #666;
    border-right: 0;
    border-radius: 4px 0 0 4px;
    background: linear-gradient(#e0e0e0, #cdcdcd);
}

.rail > button.on {
    width: 29px;
    height: 44px;
    margin: -2px 0;
    background: #ebebeb;
}

.rail > button svg {
    width: 24px;
    height: 26px;
}

.rail > .apart {
    margin-top: 12px;
}

.rail > .cutoff {
    height: 33px;
    border-bottom-style: dashed;
}

.steps {
    width: 23px;
    padding-top: 1px;
}

.steps button {
    width: 16px;
    height: 16px;
    border: 1px solid #999;
    background: #e4e4e4;
}

.steps svg {
    width: 10px;
    height: 10px;
    fill: #444;
    stroke: #444;
}

.steps button:disabled svg {
    fill: #aaa;
    stroke: #aaa;
}

.panel {
    width: 297px;
    flex: none;
    padding: 0 8px 5px 9px;
    display: flex;
    flex-direction: column;
    background: #ebebeb;
    border-right: 2px solid #777;
    border-bottom: 1px solid #888;
}

.panel h2 {
    height: 31px;
    flex: none;
    margin: 0;
    padding-left: 5px;
    display: flex;
    align-items: center;
    font-size: 13px;
    white-space: pre;
}

.panel h2 span {
    font: bold 11px/16px "Liberation Mono", monospace;
}

.panel h2 svg {
    width: 12px;
    height: 12px;
    margin-right: 12px;
}

.tree {
    flex: 1;
    min-height: 0;
    display: flex;
    flex-direction: column;
    border: 1px solid #555;
    background: #fff;
}

.rows {
    flex: 1;
    min-height: 0;
    overflow: hidden;
}

.rows table {
    width: 100%;
    table-layout: fixed;
    border-collapse: separate;
    border-spacing: 0;
}

.c1 {
    width: 156px;
}

.c2 {
    width: 100px;
}

.rows th {
    height: 17px;
    padding: 0 0 0 6px;
    overflow: hidden;
    font-weight: normal;
    line-height: 16px;
    text-align: left;
    white-space: nowrap;
    background: linear-gradient(#eceeef, #d3d6d8);
    border-right: 1px solid #aaa;
    border-bottom: 1px solid #777;
}

.rows td {
    height: 20px;
    padding: 1px 0 0 4px;
    overflow: hidden;
    white-space: nowrap;
    border-right: 1px solid #e3e3e3;
    border-bottom: 1px solid #e3e3e3;
}

.rows td:first-child {
    border-right-color: #000;
}

.rows tr:nth-child(even) td {
    background: #f6f6f6;
}

.rows .sel td + td {
    background: #3399ff;
    color: #fff;
}

.node {
    display: flex;
    align-items: center;
    gap: 3px;
    height: 18px;
}

.n1 {
    padding-left: 6px;
}

.n1 .folder {
    margin-left: -1px;
}

.n3 {
    padding-left: 25px;
}

.dots {
    width: 9px;
    border-top: 1px dotted #888;
}

.n3 .dots {
    width: 10px;
    height: 10px;
    margin-bottom: 10px;
    border-top: 0;
    border-left: 1px dotted #888;
    border-bottom: 1px dotted #888;
}

.dots.short {
    width: 4px;
}

.box {
    width: 9px;
    height: 9px;
    margin-left: 1px;
    border: 1px solid #888;
    border-radius: 2px;
    background: linear-gradient(#333, #333) center / 5px 1px no-repeat #fff;
}

.folder {
    width: 15px;
    height: 14px;
}

.warn {
    width: 10px;
    height: 17px;
}

.pick {
    flex: 1;
    line-height: 19px;
    padding-left: 3px;
    margin-left: -2px;
    background: #3399ff;
    color: #fff;
}

.holder {
    width: 8px;
    height: 14px;
    margin-left: 4px;
}

.hscroll {
    height: 18px;
    flex: none;
    display: flex;
    align-items: center;
    padding: 0 6px;
    background: #f0f0f0;
}

.hscroll i {
    border: 3px solid transparent;
}

.hscroll .left {
    border-right: 4px solid #222;
    border-left: 0;
}

.hscroll .right {
    margin-left: auto;
    border-left: 4px solid #222;
    border-right: 0;
}

.thumb {
    width: 98px;
    height: 15px;
    margin-left: 9px;
    display: flex;
    align-items: center;
    justify-content: center;
    border: 1px solid #888;
    border-radius: 2px;
    background: linear-gradient(#f4f4f4, #cfd1d3);
}

.thumb b {
    width: 8px;
    height: 7px;
    background: repeating-linear-gradient(90deg, #555 0, #555 1px, transparent 1px, transparent 3px);
}

.splitter {
    height: 12px;
    flex: none;
    display: flex;
    align-items: center;
    gap: 5px;
}

.splitter::before,
.splitter::after {
    content: "";
    flex: 1;
    border-top: 1px solid #aaa;
    border-bottom: 1px solid #fff;
}

.splitter span {
    width: 50px;
    height: 5px;
    background: #ccc;
    border-right: 1px solid #888;
    border-bottom: 1px solid #888;
}

.fold {
    height: 23px;
    padding-left: 7px;
    justify-content: space-between;
    font-size: 13px;
    font-weight: bold;
    background: linear-gradient(#f4f4f4, #e7e8e9 50%, #d2d4d6);
    border-right: 1px solid #777;
    border-bottom: 1px solid #888;
}

.fold svg {
    width: 23px;
    height: 22px;
    padding: 5px;
    border-left: 1px solid #999;
}

/* graphics window */
.view {
    position: relative;
    flex: 1;
    min-width: 0;
    overflow: hidden;
    background: linear-gradient(#b5b6b8, #cfd0d1 42%, #e6e8e9 75%);
}

.scene {
    width: 100%;
    height: 100%;
    font: 12px "Liberation Sans", sans-serif;
}

.scene .feed {
    shape-rendering: crispEdges;
}

.mark {
    position: absolute;
    right: 25px;
    bottom: 12px;
    display: flex;
    align-items: center;
    gap: 8px;
    color: rgba(255, 255, 255, .5);
    pointer-events: none;
}

.mark svg {
    width: 72px;
    height: 82px;
}

.mark p {
    margin: 0;
    width: 178px;
    white-space: nowrap;
}

.mark strong {
    display: block;
    font-size: 42px;
    line-height: 44px;
}

.mark span {
    display: block;
    font: bold 15px/18px "DejaVu Sans", sans-serif;
}

/* network speed ball */
.speed {
    position: absolute;
    right: 1px;
    bottom: 4px;
    width: 104px;
    height: 39px;
    padding-right: 6px;
    display: flex;
    align-items: center;
    justify-content: space-between;
    border: 1px solid #999;
    border-radius: 20px;
    background: linear-gradient(#f6f6f6, #dcdcdc);
}

.ball {
    width: 48px;
    height: 48px;
    margin-left: -24px;
    flex: none;
    border: 3px solid #eee;
    border-radius: 50%;
    outline: 1px solid #777;
    background: linear-gradient(#147a4d 0, #2f9b68 14px, #4fd05f 15px, #42cb5c);
    color: #fff;
    font: 14px/42px "Liberation Sans", sans-serif;
    text-align: center;
}

.speed ul {
    width: 46px;
    margin: 0;
    padding: 0;
    list-style: none;
}

.speed li {
    display: flex;
    align-items: center;
    justify-content: space-between;
    font: 10px/15px "Noto Sans", sans-serif;
}

.speed li svg {
    width: 7px;
    height: 8px;
}

.speed button {
    position: relative;
    width: 17px;
    height: 17px;
    border-radius: 50%;
    background: #2f78d8;
    color: #fff;
    font: bold 16px/16px "Liberation Sans", sans-serif;
}

.speed button::after {
    content: "";
    position: absolute;
    top: -2px;
    right: -2px;
    width: 8px;
    height: 8px;
    border-radius: 50%;
    background: #de3030;
}
```
